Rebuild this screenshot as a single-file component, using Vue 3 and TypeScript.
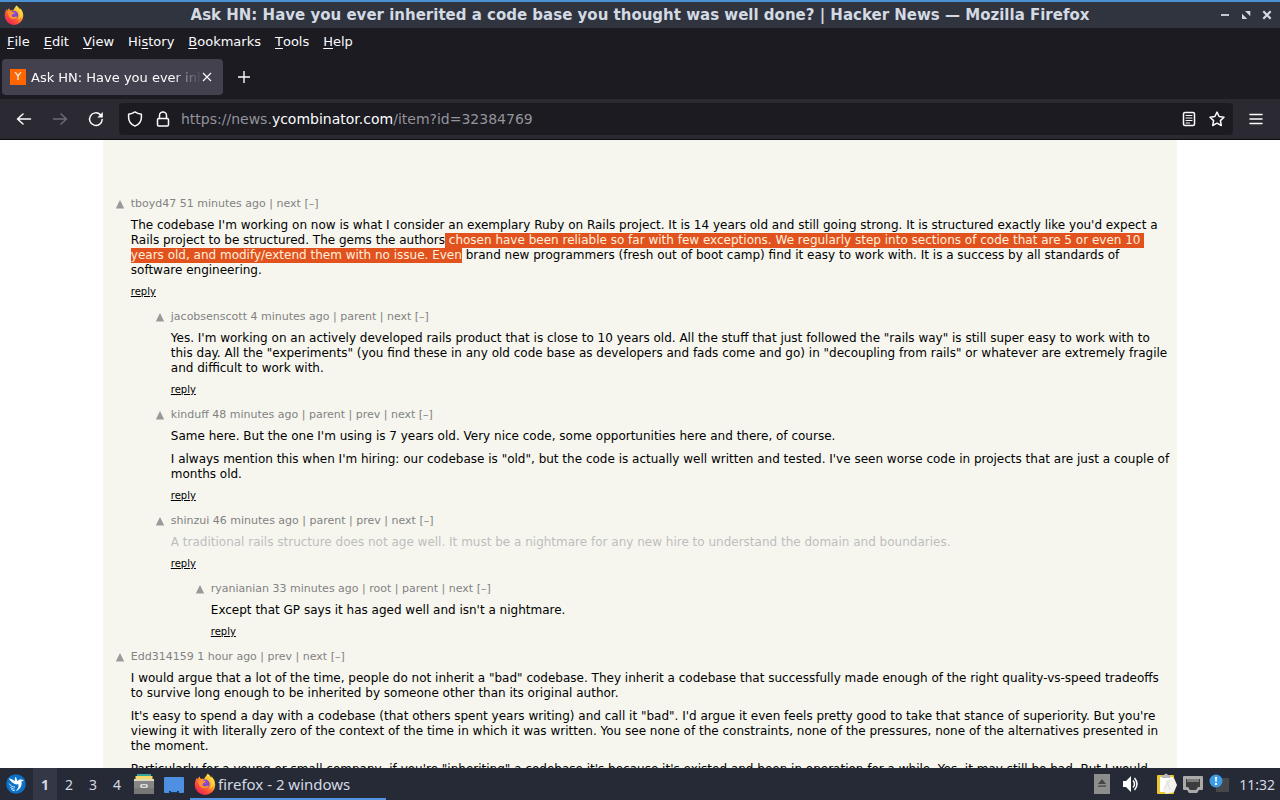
<script setup lang="ts">
import { ref } from 'vue'

interface Segment {
  text: string
  selected?: boolean
  breakAfter?: boolean
}

interface Comment {
  user: string
  age: string
  links: string[]
  depth: number
  faded?: boolean
  paragraphs: Segment[][]
}

const pageTitle = 'Ask HN: Have you ever inherited a code base you thought was well done? | Hacker News'
const menus = ['File', 'Edit', 'View', 'History', 'Bookmarks', 'Tools', 'Help']
const accessKeys = [0, 0, 0, 2, 0, 0, 0]
const desktops = [1, 2, 3, 4]
const activeDesktop = ref(1)

const comments: Comment[] = [
  {
    user: 'tboyd47',
    age: '51 minutes ago',
    links: ['next'],
    depth: 0,
    paragraphs: [
      [
        { text: "The codebase I'm working on now is what I consider an exemplary Ruby on Rails project. It is 14 years old and still going strong. It is structured exactly like you'd expect a Rails project to be structured. The gems the authors" },
        { text: ' chosen have been reliable so far with few exceptions. We regularly step into sections of code that are 5 or even 10\u00a0', selected: true, breakAfter: true },
        { text: 'years old, and modify/extend them with no issue. Even', selected: true },
        { text: ' brand new programmers (fresh out of boot camp) find it easy to work with. It is a success by all standards of software engineering.' },
      ],
    ],
  },
  {
    user: 'jacobsenscott',
    age: '4 minutes ago',
    links: ['parent', 'next'],
    depth: 1,
    paragraphs: [
      [{ text: 'Yes. I\'m working on an actively developed rails product that is close to 10 years old. All the stuff that just followed the "rails way" is still super easy to work with to this day. All the "experiments" (you find these in any old code base as developers and fads come and go) in "decoupling from rails" or whatever are extremely fragile and difficult to work with.' }],
    ],
  },
  {
    user: 'kinduff',
    age: '48 minutes ago',
    links: ['parent', 'prev', 'next'],
    depth: 1,
    paragraphs: [
      [{ text: "Same here. But the one I'm using is 7 years old. Very nice code, some opportunities here and there, of course." }],
      [{ text: 'I always mention this when I\'m hiring: our codebase is "old", but the code is actually well written and tested. I\'ve seen worse code in projects that are just a couple of months old.' }],
    ],
  },
  {
    user: 'shinzui',
    age: '46 minutes ago',
    links: ['parent', 'prev', 'next'],
    depth: 1,
    faded: true,
    paragraphs: [
      [{ text: 'A traditional rails structure does not age well. It must be a nightmare for any new hire to understand the domain and boundaries.' }],
    ],
  },
  {
    user: 'ryanianian',
    age: '33 minutes ago',
    links: ['root', 'parent', 'next'],
    depth: 2,
    paragraphs: [[{ text: "Except that GP says it has aged well and isn't a nightmare." }]],
  },
  {
    user: 'Edd314159',
    age: '1 hour ago',
    links: ['prev', 'next'],
    depth: 0,
    paragraphs: [
      [{ text: 'I would argue that a lot of the time, people do not inherit a "bad" codebase. They inherit a codebase that successfully made enough of the right quality-vs-speed tradeoffs to survive long enough to be inherited by someone other than its original author.' }],
      [{ text: 'It\'s easy to spend a day with a codebase (that others spent years writing) and call it "bad". I\'d argue it even feels pretty good to take that stance of superiority. But you\'re viewing it with literally zero of the context of the time in which it was written. You see none of the constraints, none of the pressures, none of the alternatives presented in the moment.' }],
      [{ text: 'Particularly for a young or small company, if you\'re "inheriting" a codebase it\'s because it\'s existed and been in operation for a while. Yes, it may still be bad. But I would' }],
    ],
  },
]
</script>

<template>
  <div class="screen">
    <svg class="defs" width="0" height="0" aria-hidden="true">
      <defs>
        <linearGradient id="flame" x1="0.85" y1="0.1" x2="0.2" y2="0.95">
          <stop offset="0" stop-color="#fff04a" />
          <stop offset="0.35" stop-color="#ffa52c" />
          <stop offset="0.65" stop-color="#ff5336" />
          <stop offset="1" stop-color="#e82258" />
        </linearGradient>
        <radialGradient id="globe" cx="0.55" cy="0.35" r="0.7">
          <stop offset="0" stop-color="#a252e8" />
          <stop offset="1" stop-color="#473bb0" />
        </radialGradient>
        <symbol id="firefox" viewBox="0 0 20 20">
          <path fill="url(#flame)" d="M12.3 0.6c2 1.2 2.8 2.6 3.2 4 .3-.6.3-1 .2-1.6 2.2 1.7 3.6 4.6 3.6 7.8a9.3 9.1 0 0 1-18.6 0c0-2.7.8-4.9 2-6.8 0 .8.1 1.2.4 1.7.5-1.1 1.2-1.9 2.2-2.5 0 .9.2 1.5.7 2.1 1-.2 2-.1 2.9.2 1-1.2 2-2.700 3.400-4.900z" />
          <circle cx="9.900" cy="10" r="4.200" fill="url(#globe)" />
          <path fill="#ff9130" d="M3.500 7.500c1.500-1.500 3.500-1.700 5.200-.6l1.900.5c-.3 1-1.400 1.300-2.100 1.700-.4.5-.1 1.300-.8 1.700.7 1.500 2.500 1.600 4.200.8 1.200-.5 1.800.1 1.200.8-1.500 2.100-5.200 2.200-7.300.1-1.500-1.400-1.900-3.300-2.300-5z" />
          <path fill="#ffd43c" d="M12.200 1c.2 2.300 2 3.700 2.900 5.500 1.500 3.100.6 6.500-2 8.500 3.100-.9 5-3.500 5-6.500 0-2.100-1-3.700-2.200-4.800l-.4 1.100C14.800 3.100 13.900 1.900 12.200 1z" />
        </symbol>
      </defs>
    </svg>

    <header class="titlebar">
      <svg class="app-icon" viewBox="0 0 20 20" aria-hidden="true"><use href="#firefox" /></svg>
      <h1>{{ pageTitle }} — Mozilla Firefox</h1>
      <div class="window-buttons">
        <button type="button" aria-label="Minimize">
          <svg viewBox="0 0 10 10"><path d="M1 5h8" stroke="currentColor" stroke-width="1.800" /></svg>
        </button>
        <button type="button" aria-label="Restore">
          <svg viewBox="0 0 10 10"><path d="M4 1h5.300v5.300zM1 3.700v5.300h5.300z" fill="currentColor" /></svg>
        </button>
        <button type="button" aria-label="Close">
          <svg viewBox="0 0 10 10"><path d="M1.300 1.300l7.400 7.400M8.700 1.300L1.300 8.700" stroke="currentColor" stroke-width="2.200" /></svg>
        </button>
      </div>
    </header>

    <nav class="menubar">
      <button v-for="(menu, i) in menus" :key="menu" type="button">{{ menu.slice(0, accessKeys[i]) }}<u>{{ menu[accessKeys[i]] }}</u>{{ menu.slice(accessKeys[i] + 1) }}</button>
    </nav>

    <div class="tabstrip">
      <div class="tab">
        <span class="favicon">Y</span>
        <span class="tab-title">{{ pageTitle }}</span>
        <button type="button" aria-label="Close tab">
          <svg width="10" height="10" viewBox="0 0 10 10"><path d="M1 1l8 8M9 1L1 9" stroke="currentColor" stroke-width="1.200" /></svg>
        </button>
      </div>
      <button class="new-tab" type="button" aria-label="New tab">
        <svg width="12" height="12" viewBox="0 0 12 12"><path d="M6 0v12M0 6h12" stroke="currentColor" stroke-width="1.400" /></svg>
      </button>
    </div>

    <div class="toolbar">
      <button type="button" aria-label="Back">
        <svg width="16" height="16" viewBox="0 0 16 16"><path d="M14.500 8H1.800M7 3L1.500 8 7 13" /></svg>
      </button>
      <button class="disabled" type="button" aria-label="Forward" disabled>
        <svg width="16" height="16" viewBox="0 0 16 16"><path d="M1.500 8h12.700M9 3l5.500 5L9 13" /></svg>
      </button>
      <button type="button" aria-label="Reload">
        <svg width="16" height="16" viewBox="0 0 16 16"><path d="M14.200 8.500A6.300 6.300 0 1 1 12.300 3.600" /><path class="solid" d="M14.800 1v5.500H9.300z" /></svg>
      </button>
      <div class="urlbar">
        <svg width="16" height="16" viewBox="0 0 16 16" aria-hidden="true"><path d="M8 .9c2 1.400 4 2 6.400 2.400v2.900c0 4-2.200 7.200-6.400 8.900-4.200-1.700-6.400-4.900-6.400-8.900V3.300C4 2.900 6 2.300 8 .9z" /></svg>
        <svg width="16" height="16" viewBox="0 0 16 16" aria-hidden="true"><rect x="2.500" y="7.500" width="11" height="7.500" rx="1.200" /><path d="M4.500 7.500V4.400a3.500 3.500 0 0 1 7 0v3.100" /></svg>
        <div class="address">https://news.<b>ycombinator.com</b>/item?id=32384769</div>
        <button type="button" aria-label="Reader view">
          <svg width="16" height="16" viewBox="0 0 16 16"><rect x="2.500" y="1.500" width="11" height="13" rx="1.500" /><path d="M5 4.500h6M5 7h6M5 9.500h6M5 12h3.500" stroke-width="1.100" /></svg>
        </button>
        <button type="button" aria-label="Bookmark this page">
          <svg width="16" height="16" viewBox="0 0 16 16"><path d="M8 1.100l2.100 4.400 4.900.7-3.600 3.400.9 4.900L8 12.200l-4.300 2.300.9-4.900L1 6.200l4.900-.7z" /></svg>
        </button>
      </div>
      <button class="app-menu" type="button" aria-label="Open application menu">
        <svg width="14" height="14" viewBox="0 0 14 14"><path d="M1 2.500h12M1 7h12M1 11.500h12" /></svg>
      </button>
    </div>

    <main class="viewport">
      <div class="thread">
        <article v-for="comment in comments" :key="comment.user" :class="['comment', 'depth-' + comment.depth]">
          <button class="vote" type="button" aria-label="Upvote">
            <svg width="10" height="10" viewBox="0 0 10 10"><path d="M5 1l4.200 8.500H.8z" fill="#999" /></svg>
          </button>
          <div class="content">
            <div class="meta">
              <a href="#">{{ comment.user }}</a> <a href="#">{{ comment.age }}</a>
              <template v-for="link in comment.links" :key="link"> | <a href="#">{{ link }}</a></template> <a href="#">[–]</a>
            </div>
            <div :class="['body', { faded: comment.faded }]">
              <p v-for="(paragraph, p) in comment.paragraphs" :key="p"><template v-for="(segment, s) in paragraph" :key="s"><mark v-if="segment.selected">{{ segment.text }}</mark><template v-else>{{ segment.text }}</template><wbr v-if="segment.breakAfter"></template></p>
            </div>
            <a class="reply" href="#">reply</a>
          </div>
        </article>
      </div>
    </main>

    <footer class="taskbar">
      <button class="launcher" type="button" aria-label="Applications">
        <svg width="20" height="20" viewBox="0 0 20 20">
          <circle cx="10" cy="10" r="9.800" fill="#0c71c8" />
          <path d="M2.800 4.500c2.400.2 4.700 1.200 6.200 3C8.600 5.700 8.800 4 9.600 2.800c1 1.300 1.500 2.800 1.400 4.500 1.400-1.700 3.500-2.300 5.400-1.500l1.600 1.100-2.500.3c.9 4.700-1.600 8.500-5.900 9.800 2.600-2.100 3.500-4.700 2.600-6.900-2.500 1.300-6.700-1.300-9.400-5.600z" fill="#fff" />
          <path d="M3.200 9.500c1.200 2.400 3.200 3.500 5.900 3.600M4 12.800c1.200 1.500 2.700 2.200 4.600 2.200M5.500 15.500c.9.800 2 1.200 3.200 1.200" fill="none" stroke="#d4e9fc" stroke-width="1" />
        </svg>
      </button>
      <button v-for="n in desktops" :key="n" type="button" :class="['desktop', { active: n === activeDesktop }]" @click="activeDesktop = n">{{ n }}</button>
      <button class="quick" type="button" aria-label="File manager">
        <svg width="22" height="22" viewBox="0 0 22 22">
          <path d="M4 1h14v4H4z" fill="#35a69b" /><path d="M2.500 3h17v5h-17z" fill="#f5d76a" /><path d="M1 6h20v3H1z" fill="#ddd9bd" />
          <rect x="1" y="8" width="20" height="13" rx="1" fill="#858585" /><path d="M1 15h20v6H1z" fill="#777" /><rect x="7" y="11" width="8" height="4" rx="2" fill="#ddd" /><path d="M9 13h4" stroke="#555" />
        </svg>
      </button>
      <button class="quick" type="button" aria-label="Show desktop">
        <svg width="22" height="22" viewBox="0 0 22 22"><rect x="1" y="4" width="20" height="16" rx="1" fill="#4d8fe0" /><path d="M6 20v-2h2v1h6v-1h2v2z" fill="#1c3863" /></svg>
      </button>
      <button class="task" type="button">
        <svg width="22" height="22" viewBox="0 0 20 20"><use href="#firefox" /></svg>
        <span>firefox - 2 windows</span>
      </button>
      <div class="tray">
        <svg width="16" height="20" viewBox="0 0 16 20"><path d="M0 0h16v20H0z" fill="#8d8d8d" /><path d="M8 5l4 5H4zM4 11.500h8v1.300H4z" fill="#464646" /></svg>
        <svg class="volume" width="18" height="18" viewBox="0 0 18 18"><path d="M1 6h3l5-5v16l-5-5H1z" fill="#fff" /><path d="M11 5.500q3 3.500 0 7M12.500 3q5 6 0 12" fill="none" stroke="#fff" stroke-width="1.500" /></svg>
        <svg width="22" height="22" viewBox="0 0 22 22"><rect x="1" y="2" width="17" height="19" rx="1" fill="#e9c92e" /><path d="M4 4h13v15H4z" fill="#fff" /><path d="M6 2h2q2-3 4 0h2v3H6z" fill="#b9b9b9" /><path d="M10 7l8-2 3 7-3 7-8 2-3-4z" fill="#f3f3ee" /><path d="M11 8l3 9M14 7l-6 9" stroke="#ddd" /></svg>
        <svg width="22" height="22" viewBox="0 0 22 22"><path d="M2 3h18q1 0 1 1v12q0 1-1 1h-3l-2 3H7l-2-3H2q-1 0-1-1V4q0-1 1-1z" fill="#aaa" /><path d="M4 6h14v8h-2l-2 3H8l-2-3H4z" fill="#3c3c3c" /><path d="M6 6v3M8 6v3M10 6v3M12 6v3M14 6v3M16 6v3" stroke="#bbb" /></svg>
        <svg width="22" height="22" viewBox="0 0 22 22"><rect x="8" y="5" width="13" height="14" fill="#45474a" /><circle cx="8" cy="8" r="6.500" fill="#3c9ce5" /><path d="M7 4h2l-.4 5H7.400zM7 10h2v2H7z" fill="#fff" /></svg>
        <time>11:32</time>
      </div>
    </footer>
  </div>
</template>

<style>
body {
  margin: 0;
}
</style>

<style scoped>
.screen {
  display: flex;
  flex-direction: column;
  height: 100vh;
  overflow: hidden;
  font-family: "DejaVu Sans", sans-serif;
  font-size: 13px;
  background: #1c1b22;
  color: #fbfbfe;
}
.defs {
  position: absolute;
}
button {
  display: flex;
  align-items: center;
  justify-content: center;
  border: 0;
  padding: 0;
  background: none;
  color: inherit;
  font: inherit;
}
svg {
  display: block;
  flex: none;
}
.titlebar {
  display: flex;
  align-items: center;
  flex: none;
  box-sizing: border-box;
  height: 28px;
  border-top: 2px solid #4a90d2;
  background: #2f343f;
  color: #d3dae3;
}
.app-icon {
  width: 20px;
  height: 20px;
  margin-left: 4px;
}
.titlebar h1 {
  flex: 1;
  margin: 0;
  padding-left: 36px;
  text-align: center;
  font-size: 15px;
  line-height: 20px;
  white-space: nowrap;
}
.window-buttons {
  display: flex;
  gap: 11px;
  padding-right: 8px;
}
.window-buttons svg {
  width: 10px;
  height: 10px;
}
.menubar {
  display: flex;
  flex: none;
  gap: 14px;
  height: 27px;
  padding-left: 7px;
}
.menubar u {
  text-underline-offset: 2px;
}
.tabstrip {
  display: flex;
  align-items: center;
  flex: none;
  height: 44px;
  padding-left: 2px;
}
.tab {
  display: flex;
  align-items: center;
  box-sizing: border-box;
  width: 221px;
  height: 36px;
  padding: 0 11px 0 8px;
  border-radius: 4px;
  background: #42414d;
}
.favicon {
  flex: none;
  width: 16px;
  margin-right: 5px;
  background: #ff6600;
  text-align: center;
  font-size: 11px;
  line-height: 16px;
}
.tab-title {
  flex: 1;
  overflow: hidden;
  white-space: nowrap;
  mask-image: linear-gradient(to right, #000 84%, #0006 91%, transparent);
}
.new-tab {
  width: 42px;
  height: 36px;
}
.toolbar {
  display: flex;
  align-items: center;
  flex: none;
  box-sizing: border-box;
  height: 41px;
  padding: 0 8px 0 6px;
  border-bottom: 1px solid #0c0c0d;
  background: #2b2a33;
}
.toolbar > button {
  width: 36px;
  height: 32px;
}
.toolbar svg {
  fill: none;
  stroke: currentColor;
  stroke-width: 1.5;
  stroke-linecap: round;
  stroke-linejoin: round;
}
.toolbar .solid {
  fill: currentColor;
  stroke: none;
}
.toolbar .disabled {
  color: #6c6b73;
}
.toolbar .app-menu {
  width: 32px;
  margin-left: 7px;
}
.urlbar {
  display: flex;
  align-items: center;
  flex: 1;
  gap: 12px;
  height: 32px;
  margin-left: 5px;
  padding: 0 8px;
  border-radius: 4px;
  background: #1c1b22;
}
.address {
  flex: 1;
  margin-left: -2px;
  font-size: 14px;
  color: #94939b;
}
.address b {
  font-weight: normal;
  color: #fbfbfe;
}
.viewport {
  flex: 1;
  min-height: 0;
  overflow: hidden;
  padding: 0 8px;
  background: #fff;
}
.thread {
  box-sizing: border-box;
  width: 85%;
  min-height: 100%;
  margin: 0 auto;
  padding: 57px 6px 0 12px;
  background: #f6f6ef;
  color: #000;
}
.comment {
  display: flex;
  gap: 6px;
  padding-bottom: 11px;
}
.depth-1 {
  margin-left: 40px;
}
.depth-2 {
  margin-left: 80px;
}
.vote {
  width: 10px;
  height: 14px;
}
.content {
  flex: 1;
}
.content a {
  color: inherit;
  text-decoration: none;
}
.meta {
  height: 14px;
  font-size: 11px;
  line-height: 14px;
  color: #828282;
}
.body {
  padding: 7px 0;
  font-size: 12px;
  line-height: 15px;
}
.body.faded {
  color: #bebebe;
}
.body p {
  margin: 0;
}
.body p + p {
  margin-top: 8px;
}
mark {
  padding-bottom: 1px;
  background: #e2521f;
  color: #fff0dc;
}
.content .reply {
  display: block;
  font-size: 10px;
  line-height: 14px;
  text-decoration: underline;
}
.taskbar {
  display: flex;
  align-items: center;
  flex: none;
  height: 32px;
  padding: 0 5px 0 6px;
  background: #262a36;
  font-family: "Noto Sans", sans-serif;
  font-size: 14px;
  color: #d3dae3;
}
.launcher {
  margin-right: 7px;
}
.desktop {
  width: 24px;
  height: 32px;
}
.desktop.active {
  background: #343846;
  font-weight: bold;
}
.quick {
  width: 30px;
}
.task {
  justify-content: flex-start;
  gap: 2px;
  box-sizing: border-box;
  width: 196px;
  height: 32px;
  margin-left: 1px;
  padding: 0 4px;
  border-top: 2px solid transparent;
  border-bottom: 2px solid #5294e2;
  font-size: 15px;
}
.tray {
  display: flex;
  align-items: center;
  gap: 4px;
  margin-left: auto;
}
.volume {
  margin: 0 12px 0 8px;
}
.tray time {
  margin-left: 5px;
}
</style>
